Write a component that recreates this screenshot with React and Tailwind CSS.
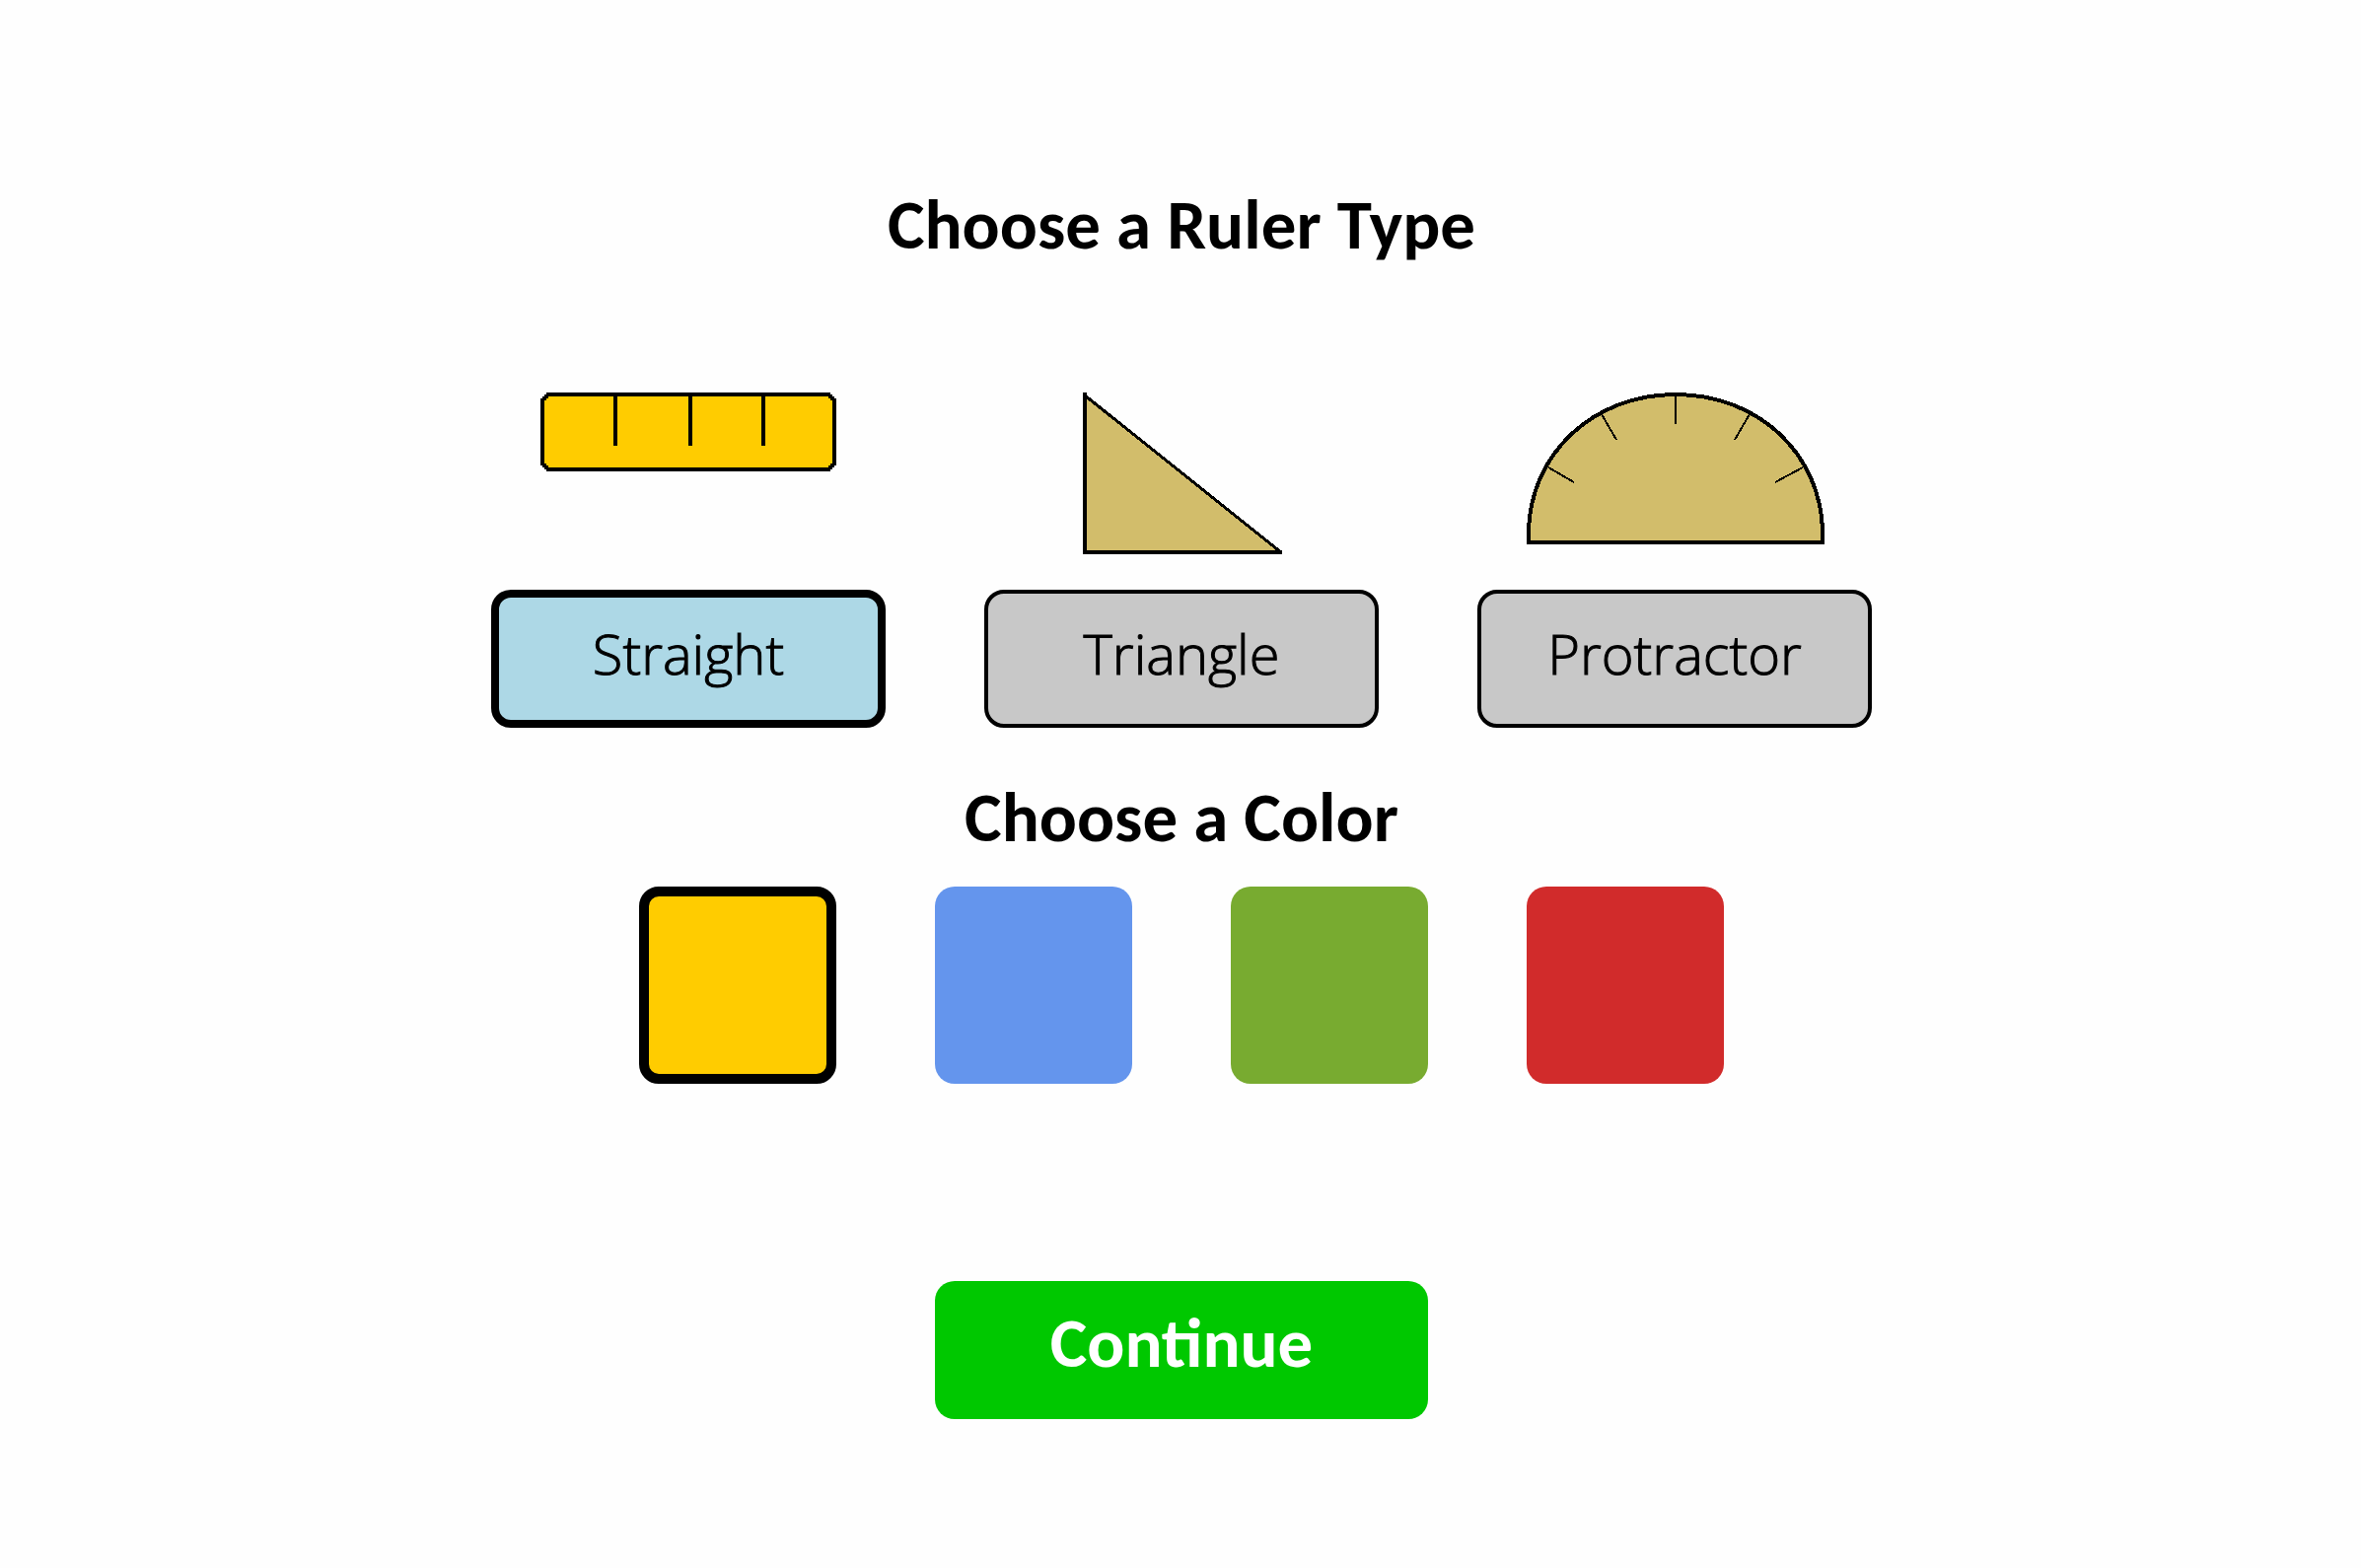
import { useState } from "react";

function StraightRuler() {
  return (
    <svg width="300" height="80" viewBox="0 0 300 80" shapeRendering="crispEdges" aria-hidden="true">
      <path d="M6 0H294V2H296V4H298V6H300V74H298V76H296V78H294V80H6V78H4V76H2V74H0V6H2V4H4V2H6Z" fill="#000" />
      <path d="M8 4H292V6H294V8H296V72H294V74H292V76H8V74H6V72H4V8H6V6H8Z" fill="#ffcc00" />
      <path d="M76 2V54M152 2V54M226 2V54" stroke="#000" strokeWidth="4" />
    </svg>
  );
}

function TriangleRuler() {
  return (
    <svg width="200" height="164" viewBox="0 0 200 164" className="overflow-visible" shapeRendering="crispEdges" aria-hidden="true">
      <path d="M2 2V162H202Z" fill="#d2bd6b" />
      <path d="M2 3L201 162" stroke="#000" strokeWidth="3" />
      <path d="M2 0V162M0 162H202" stroke="#000" strokeWidth="4" fill="none" />
    </svg>
  );
}

function ProtractorRuler() {
  return (
    <svg width="300" height="154" viewBox="0 0 300 154" className="overflow-visible" shapeRendering="crispEdges" aria-hidden="true">
      <path d="M2 152V144C2 62 68 2 151 2S300 62 300 144V152Z" fill="#d2bd6b" />
      <path d="M2 152V144C2 62 68 2 151 2S300 62 300 144V152" fill="none" stroke="#000" strokeWidth="4" />
      <path d="M0 152H302" stroke="#000" strokeWidth="4" />
      <path d="M151 2V32M76 22L91 48M226 22L211 48M22 76L48 91M280 76L252 91" stroke="#000" strokeWidth="2" />
    </svg>
  );
}

const rulers = [
  { name: "Straight", Picture: StraightRuler },
  { name: "Triangle", Picture: TriangleRuler },
  { name: "Protractor", Picture: ProtractorRuler },
];

const colors = [
  { name: "Yellow", fill: "bg-[#ffcc00]" },
  { name: "Blue", fill: "bg-[#6495ed]" },
  { name: "Green", fill: "bg-[#78ab30]" },
  { name: "Red", fill: "bg-[#d12b2b]" },
];

const heading = "text-center text-[71px] leading-[88px] font-bold";

export default function App() {
  const [ruler, setRuler] = useState("Straight");
  const [color, setColor] = useState("Yellow");

  return (
    <main className="flex min-h-screen flex-col items-center bg-[#fefefe] pt-[184px] pb-[150px] pl-0.5 font-[Calibri,Carlito,Lato,sans-serif] text-black">
      <h1 className={heading}>Choose a Ruler Type</h1>

      <div className="mt-[126px] flex justify-center gap-[100px]">
        {rulers.map(({ name, Picture }) => (
          <div key={name} className="flex w-[400px] flex-col">
            <div className="flex h-[200px] items-start justify-center">
              <Picture />
            </div>
            <button
              type="button"
              aria-pressed={ruler === name}
              onClick={() => setRuler(name)}
              className={
                "flex h-[140px] items-center justify-center rounded-[20px] border-black pb-3 font-['Open_Sans',sans-serif] text-[56px] leading-none font-light [-webkit-text-stroke:1px_black] " +
                (ruler === name ? "border-8 bg-[#add8e6]" : "border-4 bg-[#c8c8c8]")
              }
            >
              {name}
            </button>
          </div>
        ))}
      </div>

      <h2 className={"mt-[47px] " + heading}>Choose a Color</h2>

      <div className="mt-[26px] flex justify-center gap-[100px]">
        {colors.map(({ name, fill }) => (
          <button
            key={name}
            type="button"
            aria-label={name}
            aria-pressed={color === name}
            onClick={() => setColor(name)}
            className={"size-[200px] rounded-[20px] border-black " + fill + (color === name ? " border-[10px]" : "")}
          />
        ))}
      </div>

      <button
        type="button"
        className="mt-[200px] flex h-[140px] w-[500px] items-center justify-center rounded-[20px] bg-[#00c800] pb-4 text-[71px] leading-none font-bold text-white"
      >
        Continue
      </button>
    </main>
  );
}
